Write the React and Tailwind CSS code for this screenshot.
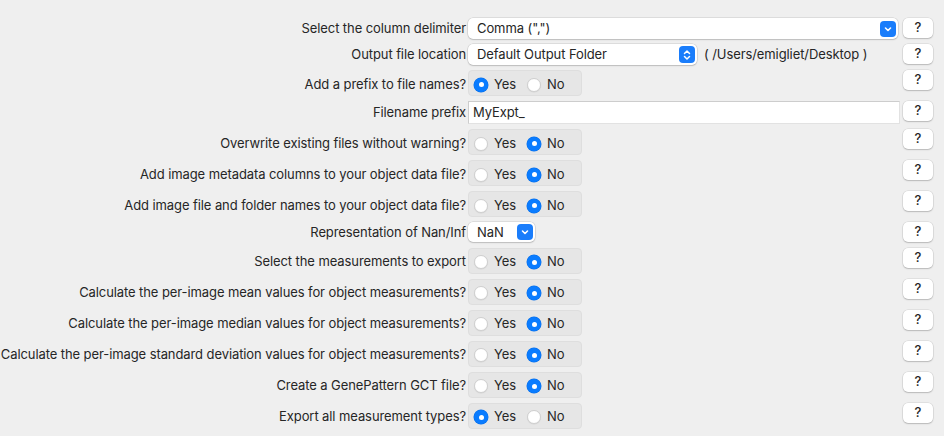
import React from "react";

const rows = [
  { label: "Select the column delimiter", type: "select", value: 'Comma (",")' },
  { label: "Output file location", type: "popup", value: "Default Output Folder" },
  { label: "Add a prefix to file names?", type: "radio", yes: true },
  { label: "Filename prefix", type: "text", value: "MyExpt_" },
  { label: "Overwrite existing files without warning?", type: "radio", yes: false },
  { label: "Add image metadata columns to your object data file?", type: "radio", yes: false },
  { label: "Add image file and folder names to your object data file?", type: "radio", yes: false },
  { label: "Representation of Nan/Inf", type: "small", value: "NaN" },
  { label: "Select the measurements to export", type: "radio", yes: false },
  { label: "Calculate the per-image mean values for object measurements?", type: "radio", yes: false },
  { label: "Calculate the per-image median values for object measurements?", type: "radio", yes: false },
  { label: "Calculate the per-image standard deviation values for object measurements?", type: "radio", yes: false },
  { label: "Create a GenePattern GCT file?", type: "radio", yes: false },
  { label: "Export all measurement types?", type: "radio", yes: true },
];

function Radio({ on }) {
  if (on) {
    return (
      <span className="flex h-[14px] w-[14px] items-center justify-center rounded-full bg-[#0a7cff] shadow-[0_0_0_0.5px_#0a6fe6]">
        <span className="h-[5px] w-[5px] rounded-full bg-white" />
      </span>
    );
  }
  return <span className="h-[14px] w-[14px] rounded-full border border-[#cfcfcf] bg-white shadow-[0_0.5px_1px_rgba(0,0,0,0.08)]" />;
}

function RadioGroup({ yes }) {
  return (
    <div className="flex h-[26px] w-[114px] items-center rounded-[4px] border border-[#dedede] bg-[#e6e6e6] pl-[5px] pt-[3px]">
      <Radio on={yes} />
      <span className="ml-[6px] w-[33px]">Yes</span>
      <Radio on={!yes} />
      <span className="ml-[6px]">No</span>
    </div>
  );
}

function ChevDown() {
  return (
    <svg width="10" height="10" viewBox="0 0 10 10">
      <path d="M2.5 4 L5 6.5 L7.5 4" fill="none" stroke="white" strokeWidth="1.6" strokeLinecap="round" strokeLinejoin="round" />
    </svg>
  );
}

function ChevUpDown() {
  return (
    <svg width="10" height="14" viewBox="0 0 10 14">
      <path d="M2.5 5.5 L5 3 L7.5 5.5 M2.5 8.5 L5 11 L7.5 8.5" fill="none" stroke="white" strokeWidth="1.5" strokeLinecap="round" strokeLinejoin="round" />
    </svg>
  );
}

function Select({ value, w, h, upDown }) {
  return (
    <div className={`flex ${h} ${w} items-center justify-between rounded-[5px] bg-white pl-[9px] pr-[2px] shadow-[0_0_0_0.5px_rgba(0,0,0,0.15),0_1px_1.5px_rgba(0,0,0,0.15)]`}>
      <span className="pt-[1px]">{value}</span>
      <span className={`flex w-[16px] items-center justify-center rounded-[4px] bg-[#1a7dfb] ${upDown ? "h-[17px]" : "h-[16px]"}`}>
        {upDown ? <ChevUpDown /> : <ChevDown />}
      </span>
    </div>
  );
}

function Help() {
  return (
    <button className="flex h-[20px] w-[30px] items-center justify-center rounded-[5px] bg-white text-[13px] font-medium text-[#262626] shadow-[0_0_0_0.5px_rgba(0,0,0,0.12),0_1px_1.5px_rgba(0,0,0,0.18)]">
      ?
    </button>
  );
}

function Control({ row }) {
  if (row.type === "select") return <Select value={row.value} w="w-[430px]" h="h-[21px]" />;
  if (row.type === "popup")
    return (
      <div className="flex items-center">
        <Select value={row.value} w="w-[229px]" h="h-[21px]" upDown />
        <span className="ml-[7px] pt-[1px]">( /Users/emigliet/Desktop )</span>
      </div>
    );
  if (row.type === "text")
    return (
      <div className="flex h-[23px] w-[432px] items-center border border-[#cdcdcd] border-b-[#e2e2e2] border-r-[#e2e2e2] bg-white pl-[4px]">
        {row.value}
      </div>
    );
  if (row.type === "small") return <Select value={row.value} w="w-[67px]" h="h-[20px]" />;
  return <RadioGroup yes={row.yes} />;
}

export default function App() {
  return (
    <div className="h-[436px] w-[944px] overflow-hidden bg-[#efefef] pt-[18px] font-['Inter','Liberation_Sans',sans-serif] text-[13px] tracking-[-0.09px] text-[#262626]">
      <div className="grid grid-cols-[466px_433px_30px] gap-x-[2px] gap-y-[5px]">
        {rows.map((row, i) => (
          <React.Fragment key={i}>
            <div className={`flex items-center justify-end whitespace-nowrap ${row.type === "radio" ? "pt-[3px]" : "pt-[1px]"}`}>
              {row.label}
            </div>
            <div className="flex items-center justify-start">
              <Control row={row} />
            </div>
            <div className="flex items-start">
              <Help />
            </div>
          </React.Fragment>
        ))}
      </div>
    </div>
  );
}
